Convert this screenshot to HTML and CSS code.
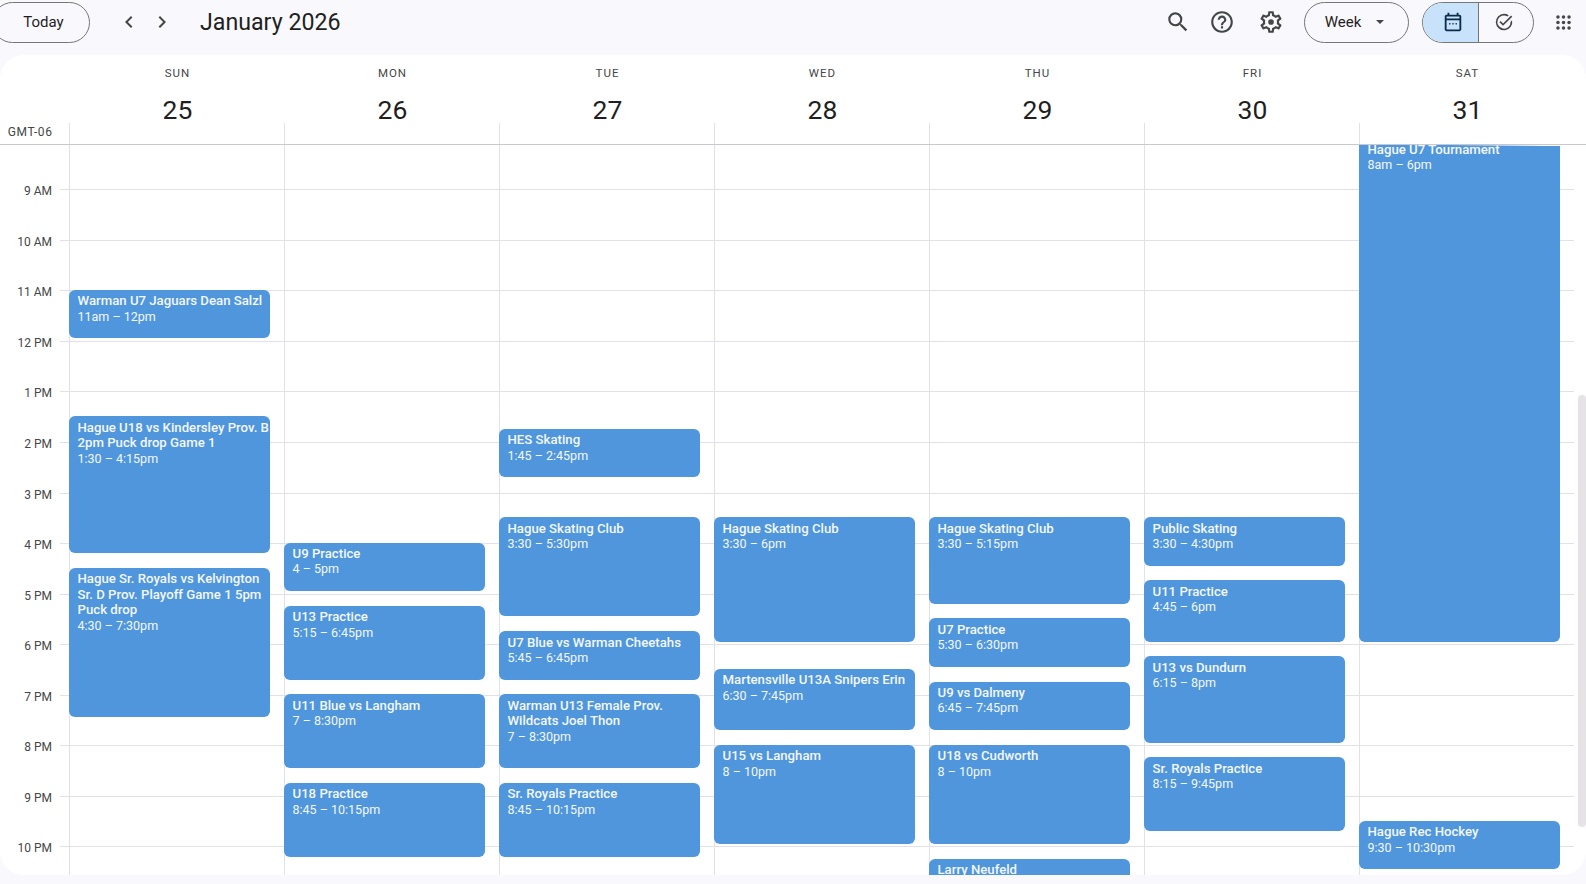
FILE: index.html
```html
<!DOCTYPE html>
<html lang="en">
<head>
  <meta charset="UTF-8">
  <meta name="viewport" content="width=device-width, initial-scale=1.0">
  <title>Calendar - Week of January 25, 2026</title>
  <link rel="stylesheet" href="styles.css">
</head>
<body>

<!-- Top Bar -->
<div class="topbar">
  <div class="today-btn">Today</div>
  <div class="nav-arrows">
    <svg class="arrow" viewBox="0 0 24 24"><path d="M15.41 7.41 14 6l-6 6 6 6 1.41-1.41L10.83 12z"/></svg>
    <svg class="arrow" viewBox="0 0 24 24"><path d="M8.59 16.59 10 18l6-6-6-6-1.41 1.41L13.17 12z"/></svg>
  </div>
  <div class="month-title">January 2026</div>
  <div class="spacer"></div>
  <div class="tools">
    <svg class="tool" viewBox="0 0 24 24"><path d="M15.5 14h-.79l-.28-.27A6.471 6.471 0 0 0 16 9.5 6.5 6.5 0 1 0 9.5 16c1.61 0 3.09-.59 4.23-1.57l.27.28v.79l5 4.99L20.49 19l-4.99-5zm-6 0C7.01 14 5 11.99 5 9.5S7.01 5 9.5 5 14 7.01 14 9.5 11.99 14 9.5 14z"/></svg>
    <svg class="tool" viewBox="0 0 24 24"><path d="M11 18h2v-2h-2v2zm1-16C6.48 2 2 6.48 2 12s4.48 10 10 10 10-4.48 10-10S17.52 2 12 2zm0 18c-4.41 0-8-3.59-8-8s3.59-8 8-8 8 3.59 8 8-3.59 8-8 8zm0-14c-2.21 0-4 1.79-4 4h2c0-1.1.9-2 2-2s2 .9 2 2c0 2-3 1.75-3 5h2c0-2.25 3-2.5 3-5 0-2.21-1.79-4-4-4z"/></svg>
    <svg class="tool" viewBox="0 0 24 24"><path d="M19.43 12.98c.04-.32.07-.64.07-.98 0-.34-.03-.66-.07-.98l2.11-1.65c.19-.15.24-.42.12-.64l-2-3.46c-.09-.16-.26-.25-.44-.25-.06 0-.12.01-.17.03l-2.49 1c-.52-.4-1.08-.73-1.69-.98l-.38-2.65C14.46 2.18 14.25 2 14 2h-4c-.25 0-.46.18-.49.42l-.38 2.65c-.61.25-1.17.59-1.69.98l-2.49-1c-.06-.02-.12-.03-.18-.03-.17 0-.34.09-.43.25l-2 3.46c-.13.22-.07.49.12.64l2.11 1.65c-.04.32-.07.65-.07.98 0 .33.03.66.07.98l-2.11 1.65c-.19.15-.24.42-.12.64l2 3.46c.09.16.26.25.44.25.06 0 .12-.01.17-.03l2.49-1c.52.4 1.08.73 1.69.98l.38 2.65c.03.24.24.42.49.42h4c.25 0 .46-.18.49-.42l.38-2.65c.61-.25 1.17-.59 1.69-.98l2.49 1c.06.02.12.03.18.03.17 0 .34-.09.43-.25l2-3.46c.12-.22.07-.49-.12-.64l-2.11-1.65zm-1.98-1.71c.04.31.05.52.05.73 0 .21-.02.43-.05.73l-.14 1.13.89.7 1.08.84-.7 1.21-1.27-.51-1.04-.42-.9.68c-.43.32-.84.56-1.25.73l-1.06.43-.16 1.13-.2 1.35h-1.4l-.19-1.35-.16-1.13-1.06-.43c-.43-.18-.83-.41-1.23-.71l-.91-.7-1.06.43-1.27.51-.7-1.21 1.08-.84.89-.7-.14-1.13c-.03-.31-.05-.54-.05-.74s.02-.43.05-.73l.14-1.13-.89-.7-1.08-.84.7-1.21 1.27.51 1.04.42.9-.68c.43-.32.84-.56 1.25-.73l1.06-.43.16-1.13.2-1.35h1.39l.19 1.35.16 1.13 1.06.43c.43.18.83.41 1.23.71l.91.7 1.06-.43 1.27-.51.7 1.21-1.07.85-.89.7.14 1.13z"/><circle cx="12" cy="12" r="2.6"/></svg>
  </div>
  <div class="week-btn">Week<span class="caret"></span></div>
  <div class="switcher">
    <div class="switch-part switch-on">
      <svg class="switch-icon" viewBox="0 0 24 24"><path d="M5 22c-1.1 0-2-.9-2-2V6c0-1.1.9-2 2-2h1V2h2v2h8V2h2v2h1c1.1 0 2 .9 2 2v14c0 1.1-.9 2-2 2H5zm0-1.800h14V10H5v10.200zM5 8.200h14V6H5v2.200z"/><circle cx="8.500" cy="14" r=".9"/><circle cx="12" cy="14" r=".9"/><circle cx="15.500" cy="14" r=".9"/></svg>
    </div>
    <div class="switch-part switch-off">
      <svg class="switch-icon" viewBox="0 0 24 24"><path d="M12 3a9 9 0 1 0 8.800 7.100l-1.600 1.600A7.200 7.200 0 1 1 15.800 5.900l1.300-1.300A9 9 0 0 0 12 3z"/><path d="m11 16.200-4-4 1.300-1.300 2.700 2.700 8.700-8.700L21 6.200z"/></svg>
    </div>
  </div>
  <svg class="apps" viewBox="0 0 24 24"><circle cx="5" cy="5" r="2.2"/><circle cx="12" cy="5" r="2.2"/><circle cx="19" cy="5" r="2.2"/><circle cx="5" cy="12" r="2.2"/><circle cx="12" cy="12" r="2.2"/><circle cx="19" cy="12" r="2.2"/><circle cx="5" cy="19" r="2.2"/><circle cx="12" cy="19" r="2.2"/><circle cx="19" cy="19" r="2.2"/></svg>
</div>

<!-- Calendar Card -->
<div class="card">

  <!-- Day Headers -->
  <div class="day-head">
    <div class="gutter-head"><span class="tz">GMT-06</span></div>
    <div class="day"><div class="dow">SUN</div><div class="date">25</div></div>
    <div class="day"><div class="dow">MON</div><div class="date">26</div></div>
    <div class="day"><div class="dow">TUE</div><div class="date">27</div></div>
    <div class="day"><div class="dow">WED</div><div class="date">28</div></div>
    <div class="day"><div class="dow">THU</div><div class="date">29</div></div>
    <div class="day"><div class="dow">FRI</div><div class="date">30</div></div>
    <div class="day"><div class="dow">SAT</div><div class="date">31</div></div>
  </div>

  <!-- Time Grid -->
  <div class="grid">
    <div class="hours">
      <div class="hour">9 AM</div>
      <div class="hour">10 AM</div>
      <div class="hour">11 AM</div>
      <div class="hour">12 PM</div>
      <div class="hour">1 PM</div>
      <div class="hour">2 PM</div>
      <div class="hour">3 PM</div>
      <div class="hour">4 PM</div>
      <div class="hour">5 PM</div>
      <div class="hour">6 PM</div>
      <div class="hour">7 PM</div>
      <div class="hour">8 PM</div>
      <div class="hour">9 PM</div>
      <div class="hour">10 PM</div>
    </div>

    <div class="col">
      <div class="event" style="--start:11;--dur:1"><b>Warman U7 Jaguars Dean Salzl</b>11am – 12pm</div>
      <div class="event" style="--start:13.5;--dur:2.75"><b>Hague U18 vs Kindersley Prov. B<br>2pm Puck drop Game 1</b>1:30 – 4:15pm</div>
      <div class="event" style="--start:16.5;--dur:3"><b>Hague Sr. Royals vs Kelvington<br>Sr. D Prov. Playoff Game 1 5pm<br>Puck drop</b>4:30 – 7:30pm</div>
    </div>

    <div class="col">
      <div class="event" style="--start:16;--dur:1"><b>U9 Practice</b>4 – 5pm</div>
      <div class="event" style="--start:17.25;--dur:1.5"><b>U13 Practice</b>5:15 – 6:45pm</div>
      <div class="event" style="--start:19;--dur:1.5"><b>U11 Blue vs Langham</b>7 – 8:30pm</div>
      <div class="event" style="--start:20.75;--dur:1.5"><b>U18 Practice</b>8:45 – 10:15pm</div>
    </div>

    <div class="col">
      <div class="event" style="--start:13.75;--dur:1"><b>HES Skating</b>1:45 – 2:45pm</div>
      <div class="event" style="--start:15.5;--dur:2"><b>Hague Skating Club</b>3:30 – 5:30pm</div>
      <div class="event" style="--start:17.75;--dur:1"><b>U7 Blue vs Warman Cheetahs</b>5:45 – 6:45pm</div>
      <div class="event" style="--start:19;--dur:1.5"><b>Warman U13 Female Prov.<br>Wildcats Joel Thon</b>7 – 8:30pm</div>
      <div class="event" style="--start:20.75;--dur:1.5"><b>Sr. Royals Practice</b>8:45 – 10:15pm</div>
    </div>

    <div class="col">
      <div class="event" style="--start:15.5;--dur:2.5"><b>Hague Skating Club</b>3:30 – 6pm</div>
      <div class="event" style="--start:18.5;--dur:1.25"><b>Martensville U13A Snipers Erin</b>6:30 – 7:45pm</div>
      <div class="event" style="--start:20;--dur:2"><b>U15 vs Langham</b>8 – 10pm</div>
    </div>

    <div class="col">
      <div class="event" style="--start:15.5;--dur:1.75"><b>Hague Skating Club</b>3:30 – 5:15pm</div>
      <div class="event" style="--start:17.5;--dur:1"><b>U7 Practice</b>5:30 – 6:30pm</div>
      <div class="event" style="--start:18.75;--dur:1"><b>U9 vs Dalmeny</b>6:45 – 7:45pm</div>
      <div class="event" style="--start:20;--dur:2"><b>U18 vs Cudworth</b>8 – 10pm</div>
      <div class="event" style="--start:22.25;--dur:1"><b>Larry Neufeld</b></div>
    </div>

    <div class="col">
      <div class="event" style="--start:15.5;--dur:1"><b>Public Skating</b>3:30 – 4:30pm</div>
      <div class="event" style="--start:16.75;--dur:1.25"><b>U11 Practice</b>4:45 – 6pm</div>
      <div class="event" style="--start:18.25;--dur:1.75"><b>U13 vs Dundurn</b>6:15 – 8pm</div>
      <div class="event" style="--start:20.25;--dur:1.5"><b>Sr. Royals Practice</b>8:15 – 9:45pm</div>
    </div>

    <div class="col">
      <div class="event" style="--start:8;--dur:10"><b>Hague U7 Tournament</b>8am – 6pm</div>
      <div class="event" style="--start:21.5;--dur:1"><b>Hague Rec Hockey</b>9:30 – 10:30pm</div>
    </div>

    <div class="top-fade"></div>
    <div class="scrollbar"></div>
  </div>
</div>

</body>
</html>
```

FILE: styles.css
```css
/* General Styles */
* {
  box-sizing: border-box;
}
html, body {
  height: 100%;
}
body {
  margin: 0;
  overflow: hidden;
  background-color: #f9f8fc;
  font-family: Roboto, "Liberation Sans", sans-serif;
  color: #1f1f1f;
}

/* Top Bar */
.topbar {
  display: flex;
  align-items: center;
  height: 55px;
  padding-bottom: 11px;
  margin-left: -8px;
}
.today-btn {
  display: flex;
  align-items: center;
  justify-content: center;
  width: 98px;
  height: 41px;
  padding-left: 5px;
  border: 1px solid #747775;
  border-radius: 21px;
  font-size: 15px;
  color: #1f1f1f;
}
.nav-arrows {
  display: flex;
  gap: 9px;
  margin-left: 27px;
}
.arrow {
  width: 24px;
  height: 24px;
  fill: #444746;
}
.month-title {
  margin-left: 26px;
  font-size: 23.2px;
  color: #1f1f1f;
}
.spacer {
  flex: 1;
}
.tools {
  display: flex;
  align-items: center;
  gap: 18px;
}
.tool {
  width: 26px;
  height: 26px;
  fill: #444746;
}
.tool:last-child {
  margin-left: 5px;
}
.week-btn {
  display: flex;
  align-items: center;
  justify-content: center;
  gap: 15px;
  width: 105px;
  height: 41px;
  margin-left: 20px;
  padding-right: 4px;
  border: 1px solid #747775;
  border-radius: 21px;
  font-size: 15px;
  color: #1f1f1f;
}
.caret {
  border-left: 4px solid transparent;
  border-right: 4px solid transparent;
  border-top: 4px solid #444746;
}
.switcher {
  display: flex;
  width: 112px;
  height: 41px;
  margin-left: 13px;
  border: 1px solid #747775;
  border-radius: 21px;
  overflow: hidden;
}
.switch-part {
  display: flex;
  align-items: center;
  justify-content: center;
}
.switch-on {
  flex: 0 0 56px;
  padding-left: 4px;
  background-color: #c9e2fb;
  border-right: 1px solid #747775;
}
.switch-off {
  flex: 1;
  padding-right: 4px;
}
.switch-icon {
  width: 22px;
  height: 22px;
  fill: #444746;
}
.switch-on .switch-icon {
  fill: #0b2b4a;
}
.apps {
  width: 19px;
  height: 19px;
  margin-left: 20px;
  margin-right: 13px;
  fill: #444746;
}

/* Calendar Card */
.card {
  height: 820px;
  background-color: #fff;
  border-radius: 24px;
  overflow: hidden;
  position: relative;
}

/* Day Headers */
.day-head {
  display: grid;
  grid-template-columns: 68.5px repeat(7, 215px);
  height: 90px;
  border-bottom: 1px solid #c8c8d0;
}
.gutter-head {
  position: relative;
}
.tz {
  position: absolute;
  top: 70px;
  right: 16px;
  font-size: 12px;
  letter-spacing: 0.6px;
  color: #444746;
}
.day {
  position: relative;
  text-align: center;
  padding: 11px 0 0 3px;
}
.day::after {
  content: "";
  position: absolute;
  left: 0;
  top: 68px;
  bottom: 0;
  border-left: 1px solid #e1e1ea;
}
.dow {
  font-size: 11.5px;
  letter-spacing: 1px;
  line-height: 14px;
  color: #444746;
}
.date {
  margin-top: 10px;
  font-size: 26.5px;
  line-height: 40px;
  color: #1f1f1f;
}

/* Time Grid - one hour is 50.55px, the view is scrolled to about 8:53am */
.grid {
  --hour: 50.55px;
  position: relative;
  height: 730px;
  display: grid;
  grid-template-columns: 68.5px repeat(7, 215px);
  overflow: hidden;
}
.hours {
  padding-top: 44.3px;
  margin-right: -1505px;
  grid-row: 1;
  grid-column: 1;
}
.hour {
  position: relative;
  height: var(--hour);
  padding-top: 1px;
  border-top: 1px solid transparent;
  font-size: 12px;
  line-height: 0;
  color: #444746;
  text-align: right;
  width: 52px;
}
.hour::after {
  content: "";
  position: absolute;
  left: 60px;
  top: -1px;
  width: 1514px;
  border-top: 1px solid #e1e1ea;
}
.col {
  position: relative;
  grid-row: 1;
  border-left: 1px solid #e1e1ea;
}

/* Event blocks */
.event {
  position: absolute;
  left: -1px;
  width: 201px;
  top: calc((var(--start) - 8.135) * var(--hour));
  height: calc(var(--dur) * var(--hour) - 2px);
  padding: 3.5px 0 0 9px;
  background-color: #4f96dc;
  border-radius: 6px;
  color: #f4f8fd;
  font-size: 12.5px;
  line-height: 15.6px;
  white-space: nowrap;
  overflow: hidden;
}
.event b {
  display: block;
  font-size: 13.2px;
  font-weight: 500;
  line-height: 15.4px;
}

/* Fade under the header line at the top of the grid */
.top-fade {
  position: absolute;
  left: 1450px;
  right: 0;
  top: 0;
  height: 1px;
  background: linear-gradient(to right, rgba(255, 255, 255, 0), #fff 70%);
}

/* Scrollbar */
.scrollbar {
  position: absolute;
  right: 0;
  top: 250px;
  width: 8px;
  height: 432px;
  border-radius: 4px;
  background-color: #e6e3e6;
}
```
